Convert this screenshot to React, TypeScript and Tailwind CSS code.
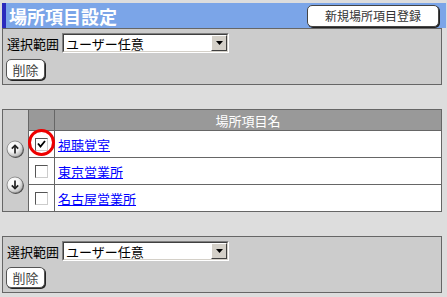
import React from "react";

const FONT = { fontFamily: '"Noto Sans CJK JP", "Noto Sans", sans-serif' };

function Select() {
  return (
    <div className="w-[167px] h-[20px] border border-t-[#808080] border-l-[#808080] border-b-white border-r-white">
      <div className="w-full h-full flex items-center border border-t-[#404040] border-l-[#404040] border-b-[#d4d0c8] border-r-[#d4d0c8] bg-white">
        <span className="flex-1 pl-[2px] text-[13px] leading-none text-black">ユーザー任意</span>
        <div className="w-[16px] h-[16px] flex items-center justify-center bg-[#d4d0c8] border border-t-white border-l-white border-b-[#404040] border-r-[#404040]">
          <svg width="7" height="4" viewBox="0 0 7 4">
            <polygon points="0,0 7,0 3.5,4" fill="#000" />
          </svg>
        </div>
      </div>
    </div>
  );
}

function DelButton() {
  return (
    <div className="w-[39px] h-[21px] flex items-center justify-center rounded-[5px] bg-white border border-[#555] shadow-[1px_1px_0_#222] text-[13px] leading-none text-[#444]">
      削除
    </div>
  );
}

function Panel() {
  return (
    <div className="w-[440px] h-[57px] border border-[#666] bg-[#cccccc] pl-[4px] pt-[4px]">
      <div className="flex items-center h-[20px]">
        <span className="text-[13px] leading-none text-black w-[55px]">選択範囲</span>
        <Select />
      </div>
      <div className="mt-[6px] -ml-[1px]">
        <DelButton />
      </div>
    </div>
  );
}

function ArrowBtn({ up }: { up: boolean }) {
  const id = up ? "gu" : "gd";
  return (
    <svg width="19" height="19" viewBox="0 0 19 19">
      <defs>
        <radialGradient id={id} cx="38%" cy="32%" r="70%">
          <stop offset="0%" stopColor="#ffffff" />
          <stop offset="55%" stopColor="#f2f2f2" />
          <stop offset="100%" stopColor="#b0b0b0" />
        </radialGradient>
      </defs>
      <circle cx="9.6" cy="9.6" r="8.3" fill="#444" />
      <circle cx="9" cy="9" r="8" fill={`url(#${id})`} stroke="#777" strokeWidth="0.7" />
      {up ? (
        <g stroke="#222" strokeWidth="1.7" fill="none">
          <line x1="9" y1="5.5" x2="9" y2="13.5" />
          <polyline points="5.8,8.7 9,5.5 12.2,8.7" />
        </g>
      ) : (
        <g stroke="#222" strokeWidth="1.7" fill="none">
          <line x1="9" y1="4.5" x2="9" y2="12.5" />
          <polyline points="5.8,9.3 9,12.5 12.2,9.3" />
        </g>
      )}
    </svg>
  );
}

function CheckBox({ checked }: { checked: boolean }) {
  return (
    <div className="w-[13px] h-[13px] border border-t-[#555] border-l-[#555] border-b-[#ccc] border-r-[#ccc] bg-white flex items-center justify-center">
      {checked && (
        <svg width="9" height="8" viewBox="0 0 9 8">
          <polyline points="1,3.5 3.5,6.5 8,1" stroke="#000" strokeWidth="1.8" fill="none" />
        </svg>
      )}
    </div>
  );
}

function Row({ name, checked, h, last }: { name: string; checked: boolean; h: string; last?: boolean }) {
  return (
    <div className={`flex bg-white ${h} ${last ? "" : "border-b border-[#666]"}`}>
      <div className="relative w-[26px] border-r border-[#666] flex items-center justify-center">
        <CheckBox checked={checked} />
        {checked && (
          <div className="absolute left-[-1px] top-[-2px] w-[27px] h-[27px] rounded-full border-[3px] border-[#ee0000]" />
        )}
      </div>
      <div className="flex-1 flex items-center pl-[3px]">
        <a href="#" className="text-[13px] leading-none text-[#0000ff] underline">
          {name}
        </a>
      </div>
    </div>
  );
}

export default function App() {
  return (
    <div className="w-[447px] h-[297px] bg-[#dddddd] pt-[3px] pl-[2px]" style={FONT}>
      <div className="w-[444px] h-[25px] flex items-center justify-between border-l-4 border-[#2b2bbd] bg-[#7ba5e8] pl-[3px] pr-[7px]">
        <span className="text-[18px] font-bold leading-none text-white">場所項目設定</span>
        <div className="w-[132px] h-[22px] flex items-center justify-center rounded-[5px] bg-white border border-[#444] shadow-[1px_1px_0_#222] text-[12px] leading-none text-[#333]">
          新規場所項目登録
        </div>
      </div>
      <Panel />
      <div className="mt-[24px] w-[440px] h-[103px] flex border border-[#666]">
        <div className="w-[26px] bg-[#cccccc] border-r border-[#666] flex flex-col items-center pt-[30px] gap-[17px]">
          <ArrowBtn up />
          <ArrowBtn up={false} />
        </div>
        <div className="flex-1 flex flex-col">
          <div className="flex h-[21px] bg-[#999999] border-b border-[#666]">
            <div className="w-[26px] border-r border-[#666]" />
            <div className="flex-1 flex items-center justify-center text-[13px] leading-none text-white">
              場所項目名
            </div>
          </div>
          <Row name="視聴覚室" checked h="h-[27px]" />
          <Row name="東京営業所" checked={false} h="h-[27px]" />
          <Row name="名古屋営業所" checked={false} h="h-[26px]" last />
        </div>
      </div>
      <div className="mt-[24px]">
        <Panel />
      </div>
    </div>
  );
}
